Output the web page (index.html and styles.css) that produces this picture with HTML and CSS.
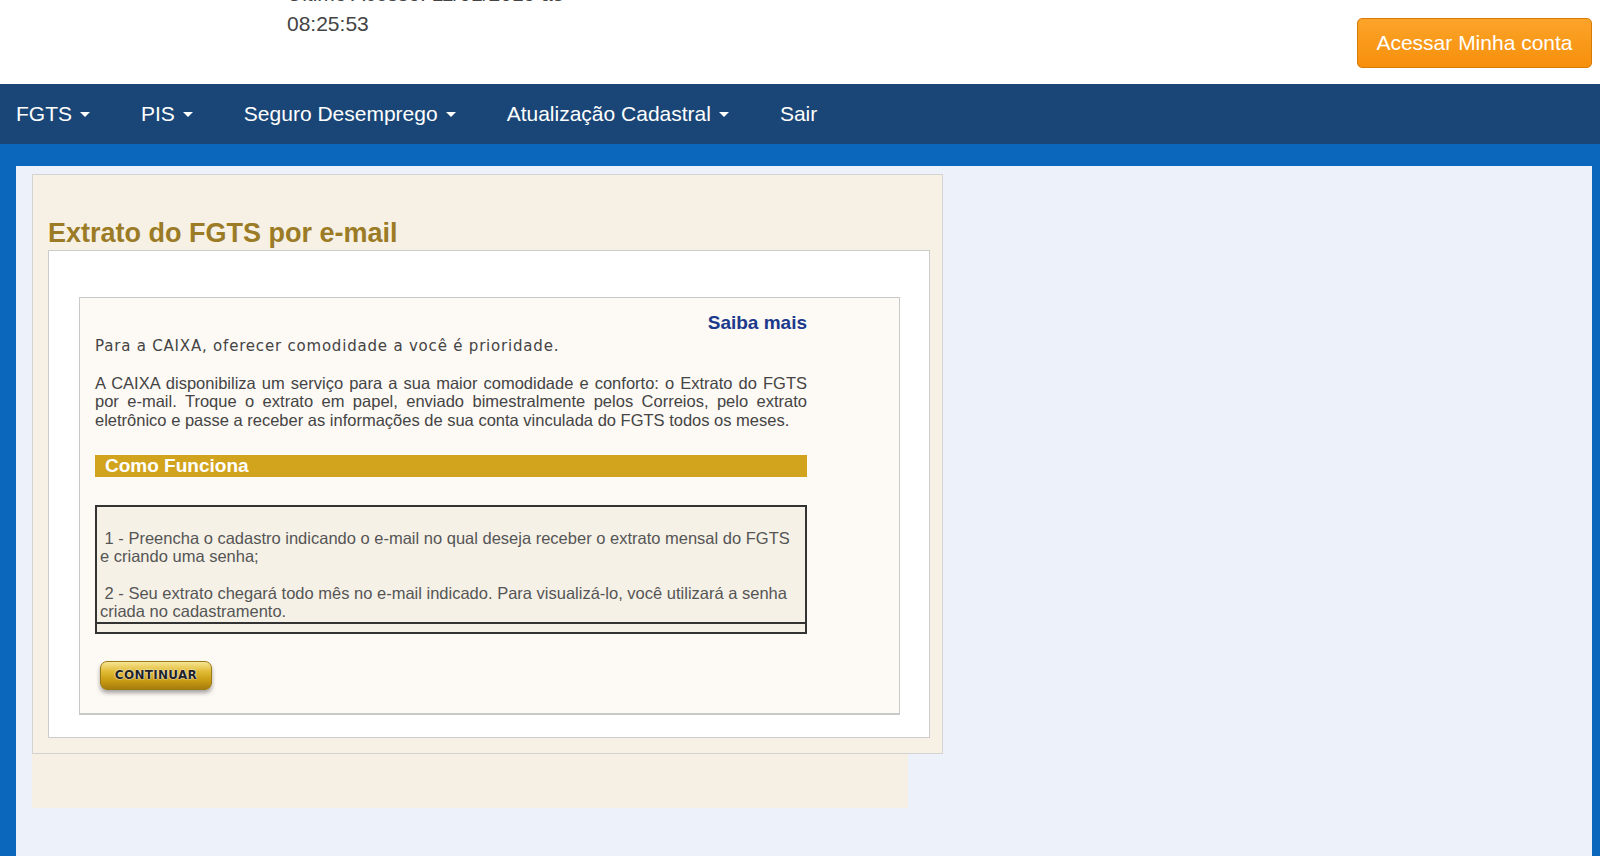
FILE: index.html
```html
<!DOCTYPE html>
<html lang="pt-BR">
<head>
    <meta charset="UTF-8">
    <title>Extrato do FGTS por e-mail</title>
    <link rel="stylesheet" href="styles.css">
</head>
<body>
    <!-- topo -->
    <header class="topbar">
        <div class="last-access">Último Acesso: 11/01/2019 às<br>08:25:53</div>
        <a href="#" class="btn-account">Acessar Minha conta</a>
    </header>

    <!-- menu principal -->
    <nav class="menu">
        <a href="#" class="menu-item">FGTS <span class="caret"></span></a>
        <a href="#" class="menu-item">PIS <span class="caret"></span></a>
        <a href="#" class="menu-item">Seguro Desemprego <span class="caret"></span></a>
        <a href="#" class="menu-item">Atualização Cadastral <span class="caret"></span></a>
        <a href="#" class="menu-item">Sair</a>
    </nav>

    <main class="page">
        <div class="panel">
            <h1 class="panel-title">Extrato do FGTS por e-mail</h1>
            <div class="panel-body">
                <div class="info-box">
                    <div class="content">
                        <a href="#" class="more-link">Saiba mais</a>
                        <p class="lead">Para a CAIXA, oferecer comodidade a você é prioridade.</p>
                        <p class="text">A CAIXA disponibiliza um serviço para a sua maior comodidade e conforto: o Extrato do FGTS por e-mail. Troque o extrato em papel, enviado bimestralmente pelos Correios, pelo extrato eletrônico e passe a receber as informações de sua conta vinculada do FGTS todos os meses.</p>
                        <div class="section-bar">Como Funciona</div>
                        <div class="steps">
                            <div class="steps-cell">
                                <br>
                                &nbsp;1 - Preencha o cadastro indicando o e-mail no qual deseja receber o extrato mensal do FGTS e criando uma senha;<br><br>
                                &nbsp;2 - Seu extrato chegará todo mês no e-mail indicado. Para visualizá-lo, você utilizará a senha criada no cadastramento.
                            </div>
                            <div class="steps-foot"></div>
                        </div>
                        <a href="#" class="btn-continue">CONTINUAR</a>
                    </div>
                </div>
            </div>
        </div>
        <div class="panel-foot"></div>
    </main>
</body>
</html>
```

FILE: styles.css
```css
body {
    margin: 0;
    padding: 0;
    font-family: "Liberation Sans", Arial, sans-serif;
    background-color: #fff;
    color: #444;
}
a {
    text-decoration: none;
}

/* topo */
.topbar {
    display: flex;
    height: 84px;
    padding-left: 287px;
    overflow: hidden;
}
.last-access {
    margin-top: -21px;
    font-size: 21px;
    line-height: 30px;
    color: #444;
}
.btn-account {
    margin-left: auto;
    margin-top: 18px;
    margin-right: 8px;
    width: 235px;
    height: 50px;
    box-sizing: border-box;
    display: flex;
    align-items: center;
    justify-content: center;
    font-size: 21px;
    color: #fff;
    background: linear-gradient(#fba42a, #f78f0b);
    border: 1px solid #d77b07;
    border-radius: 5px;
}

/* menu */
.menu {
    display: flex;
    align-items: center;
    height: 60px;
    background-color: #1a4677;
}
.menu-item {
    display: flex;
    align-items: center;
    padding: 0 35px 0 16px;
    color: #fff;
    font-size: 21px;
}
.caret {
    display: inline-block;
    margin-left: 8px;
    border-top: 5px solid #fff;
    border-left: 5px solid transparent;
    border-right: 5px solid transparent;
}

/* area principal */
.page {
    box-sizing: border-box;
    min-height: calc(100vh - 144px);
    background-color: #edf2fa;
    border-top: 22px solid #0a67bb;
    border-left: 16px solid #0a67bb;
    border-right: 8px solid #0a67bb;
    padding: 8px 0 0 16px;
}
.panel {
    width: 911px;
    box-sizing: border-box;
    background-color: #f6f1e4;
    border: 1px solid #d3d3d3;
    padding: 42px 12px 15px 15px;
}
.panel-title {
    margin: 0 0 1px 0;
    font-size: 27px;
    line-height: 32px;
    color: #9b7b25;
}
.panel-body {
    background-color: #fff;
    border: 1px solid #ccc;
    padding: 46px 29px 22px 30px;
}
.info-box {
    background-color: #fdf9f5;
    border: 1px solid #c9c9c9;
    border-bottom-width: 2px;
    padding: 14px 0 23px 15px;
}
.content {
    width: 712px;
}
.more-link {
    display: block;
    text-align: right;
    font-size: 19px;
    line-height: 22px;
    font-weight: bold;
    color: #1c3a8c;
}
.lead {
    margin: 3px 0 0 0;
    font-family: "DejaVu Sans", Verdana, sans-serif;
    font-size: 15px;
    line-height: 18px;
    letter-spacing: 0.8px;
    color: #444;
}
.text {
    margin: 19px 0 0 0;
    font-size: 16.5px;
    line-height: 18.4px;
    text-align: justify;
    color: #444;
}
.section-bar {
    margin-top: 26px;
    height: 22px;
    line-height: 22px;
    padding-left: 10px;
    background-color: #d2a41e;
    color: #fff;
    font-size: 19px;
    font-weight: bold;
}
.steps {
    margin-top: 28px;
    border: 2px solid #333;
    background-color: #f5f1e7;
}
.steps-cell {
    padding: 3px 4px 1px 3px;
    font-size: 16.5px;
    line-height: 18.4px;
    color: #555;
}
.steps-foot {
    height: 8px;
    border-top: 2px solid #333;
}
.btn-continue {
    display: flex;
    align-items: center;
    justify-content: center;
    margin: 27px 0 0 5px;
    width: 112px;
    height: 29px;
    box-sizing: border-box;
    border: 1px solid #9c7a14;
    border-radius: 7px;
    background: linear-gradient(#f6e595 0%, #e1bb35 35%, #c89a12 70%, #a67c0c 100%);
    box-shadow: 0 3px 4px rgba(0, 0, 0, 0.35);
    font-family: "DejaVu Sans", Verdana, sans-serif;
    font-size: 12px;
    font-weight: bold;
    letter-spacing: 0.3px;
    color: #222;
    text-shadow: 0 0 2px #fff, 0 0 1px #fff;
}
.panel-foot {
    width: 876px;
    height: 54px;
    background-color: #f5f0e3;
}
```
